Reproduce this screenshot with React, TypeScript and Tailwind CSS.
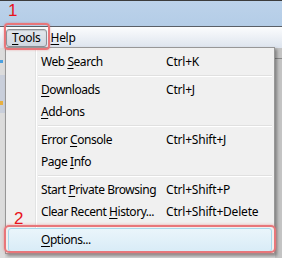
import React from "react";

const font = { fontFamily: '"Segoe UI", "Noto Sans", "Liberation Sans", sans-serif' };

function U({ children }: { children: React.ReactNode }) {
  return <span className="underline underline-offset-[2px] decoration-[1px]">{children}</span>;
}

function Item({ label, shortcut }: { label: React.ReactNode; shortcut?: string }) {
  return (
    <div className="flex h-[22px] items-center">
      <div className="w-[35px] shrink-0" />
      <div className="w-[125px] shrink-0 whitespace-nowrap tracking-[-0.45px]">{label}</div>
      <div className="whitespace-nowrap tracking-[-0.2px]">{shortcut}</div>
    </div>
  );
}

function Sep() {
  return (
    <div className="flex h-[6px] flex-col justify-center pl-[32px] pr-[2px]">
      <div className="h-px bg-[#e0e0e0]" />
      <div className="h-px bg-white" />
    </div>
  );
}

export default function App() {
  return (
    <div
      className="relative h-[258px] w-[282px] overflow-hidden bg-[#d6d6d6] text-[12px] text-black"
      style={font}
    >
      {/* title / tab area */}
      <div className="h-[26px] border-t border-[#3c3c3c] bg-gradient-to-b from-[#bcd2ea] to-[#b4cde7]" />
      <div className="h-px bg-[#5a5f66]" />
      {/* menubar */}
      <div className="flex h-[21px] items-center bg-gradient-to-b from-[#fbfcfd] to-[#dde4ee] pl-[6px] tracking-[-0.3px]">
        <div className="flex h-[18px] items-center rounded-[3px] border border-[#8d9197] bg-gradient-to-b from-[#e3e8ee] to-[#cfd7e0] px-[5px] shadow-[inset_0_1px_1px_rgba(0,0,0,0.15)]">
          <U>T</U>ools
        </div>
        <div className="ml-[4px]">
          <U>H</U>elp
        </div>
      </div>
      {/* page behind */}
      <div className="flex h-[210px]">
        <div className="w-[5px] bg-[#dcdcdc]">
          <div className="mt-[12px] h-[3px] w-[3px] bg-[#4aa0e0]" />
          <div className="mt-[12px] h-[38px] w-[5px] bg-[#c9cfdb]" />
          <div className="-mt-[12px] h-[4px] w-[3px] bg-[#e8b040]" />
        </div>
        <div className="flex-1" />
        <div className="w-[7px] bg-[#c4c4c4]">
          <div className="mt-[10px] h-px bg-[#8a8a8a]" />
        </div>
      </div>

      {/* the dropdown menu */}
      <div className="absolute left-[5px] top-[47px] w-[270px] border border-[#979797] bg-[#f0f0f0] pb-[2px] pt-[3px] shadow-[2px_2px_3px_rgba(0,0,0,0.35)]">
        <div className="absolute bottom-0 left-[29px] top-0 w-px bg-[#e2e3e3]" />
        <div className="absolute bottom-0 left-[30px] top-0 w-px bg-white" />
        <div className="relative">
          <Item label={<>Web <U>S</U>earch</>} shortcut="Ctrl+K" />
          <Sep />
          <Item label={<><U>D</U>ownloads</>} shortcut="Ctrl+J" />
          <Item label={<><U>A</U>dd-ons</>} />
          <Sep />
          <Item label={<>Error <U>C</U>onsole</>} shortcut="Ctrl+Shift+J" />
          <Item label={<>Page <U>I</U>nfo</>} />
          <Sep />
          <Item label={<>Start <U>P</U>rivate Browsing</>} shortcut="Ctrl+Shift+P" />
          <Item label={<>Clear Recent <U>H</U>istory...</>} shortcut="Ctrl+Shift+Delete" />
          <Sep />
          <div className="relative">
            <div className="absolute inset-x-[2px] -top-[1px] h-[24px] rounded-[3px] border border-[#a8d8eb] bg-gradient-to-b from-[#eaf5fb] to-[#d9ecf7]" />
            <div className="relative">
              <Item label={<><U>O</U>ptions...</>} />
            </div>
          </div>
        </div>
      </div>

      {/* annotations */}
      <div className="absolute left-[4px] top-[23px] h-[27px] w-[46px] rounded-[4px] border-2 border-[#e8767a] shadow-[0_0_2px_rgba(232,80,80,0.5)]" />
      <div className="absolute left-[8px] top-[1px] text-[17px] leading-[20px] text-[#e8141c]" style={{ fontFamily: '"Liberation Sans", Arial, sans-serif' }}>1</div>
      <div className="absolute left-[4px] top-[225px] h-[28px] w-[272px] rounded-[5px] border-2 border-[#e8767a] shadow-[0_0_3px_rgba(232,80,80,0.5)]" />
      <div className="absolute left-[14px] top-[209px] text-[17px] leading-[20px] text-[#e8141c]" style={{ fontFamily: '"Liberation Sans", Arial, sans-serif' }}>2</div>
    </div>
  );
}
